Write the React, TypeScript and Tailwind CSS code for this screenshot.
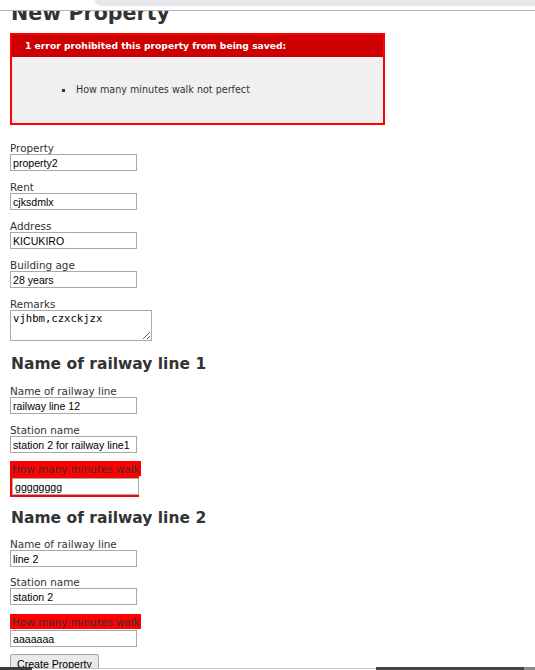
import React from "react";

const labelCls =
  "block h-[12px] leading-[12px] text-[10.4px] text-[#333] font-['DejaVu_Sans',Verdana,sans-serif] whitespace-nowrap";
const inputCls =
  "block w-[127px] h-[17px] border border-[#a9a9a9] bg-white px-[2px] text-[10.6px] leading-[15px] text-black font-['Liberation_Sans',Arial,sans-serif] outline-none";

type FieldProps = {
  label: string;
  value: string;
  className?: string;
};

const Field: React.FC<FieldProps> = ({ label, value, className = "" }) => (
  <div className={className}>
    <label className={labelCls}>{label}</label>
    <input className={inputCls} defaultValue={value} readOnly />
  </div>
);

const ErrorField: React.FC<FieldProps & { wrapInput?: boolean }> = ({
  label,
  value,
  className = "",
  wrapInput,
}) => (
  <div className={className}>
    <div className="w-[131px] h-[15px] bg-[red] p-[2px]">
      <label className={labelCls + " h-[11px] leading-[11px] text-[#4a1515]"}>{label}</label>
    </div>
    {wrapInput ? (
      <div className="w-[129px] bg-[red] p-[2px]">
        <input className={inputCls + " w-[125px]"} defaultValue={value} readOnly />
      </div>
    ) : (
      <input className={inputCls + " mt-px"} defaultValue={value} readOnly />
    )}
  </div>
);

const App: React.FC = () => {
  return (
    <div className="relative h-[670px] w-[535px] overflow-hidden bg-white font-['DejaVu_Sans',Verdana,sans-serif] text-[#333]">
      {/* Page */}
      <div className="pl-[10px] pt-px">
        <h1 className="h-[24px] leading-[24px] text-[20.6px] font-bold pl-px">New Property</h1>

        {/* Error explanation */}
        <div className="mt-[8px] w-[375px] border-2 border-[red] bg-[#f0f0f0]">
          <div className="h-[22px] flex items-center pl-[13px] bg-[#cc0000] text-white font-bold text-[9.2px]">
            1 error prohibited this property from being saved:
          </div>
          <div className="h-[66px] flex items-center pl-[50px] text-[9.6px] text-[#333]">
            <span className="w-[3px] h-[3px] bg-[#333] mr-[11px]" />
            How many minutes walk not perfect
          </div>
        </div>

        {/* Property fields */}
        <Field label="Property" value="property2" className="mt-[17px]" />
        <Field label="Rent" value="cjksdmlx" className="mt-[10px]" />
        <Field label="Address" value="KICUKIRO" className="mt-[10px]" />
        <Field label="Building age" value="28 years" className="mt-[10px]" />
        <div className="mt-[10px]">
          <label className={labelCls}>Remarks</label>
          <textarea
            className="block w-[142px] h-[31px] border border-[#a9a9a9] px-[2px] py-px text-[10.6px] leading-[13px] text-black font-['DejaVu_Sans_Mono','Liberation_Mono',monospace] resize-y outline-none"
            defaultValue="vjhbm,czxckjzx"
            readOnly
          />
        </div>

        {/* Railway line 1 */}
        <h3 className="mt-[13px] h-[20px] leading-[20px] text-[15.5px] font-bold pl-px">
          Name of railway line 1
        </h3>
        <Field label="Name of railway line" value="railway line 12" className="mt-[11px]" />
        <Field label="Station name" value="station 2 for railway line1" className="mt-[10px]" />
        <ErrorField label="How many minutes walk" value="gggggggg" className="mt-[8px]" wrapInput />

        {/* Railway line 2 */}
        <h3 className="mt-[11px] h-[20px] leading-[20px] text-[15.5px] font-bold pl-px">
          Name of railway line 2
        </h3>
        <Field label="Name of railway line" value="line 2" className="mt-[10px]" />
        <Field label="Station name" value="station 2" className="mt-[9px]" />
        <ErrorField label="How many minutes walk" value="aaaaaaa" className="mt-[9px]" />

        <button className="mt-[7px] h-[21px] px-[6px] border border-[#a6a6a6] rounded-[2px] bg-[#e9e9e9] text-[10.6px] leading-[19px] text-black font-['Liberation_Sans',Arial,sans-serif]">
          Create Property
        </button>
      </div>

      {/* Browser chrome at top */}
      <div className="absolute top-0 left-0 w-full h-[10px] bg-white">
        <div className="absolute top-0 left-[95px] right-0 h-[6px] bg-[#e6e7ea] rounded-bl-[8px]" />
      </div>
      <div className="absolute top-[10px] left-0 w-full h-px bg-[#b5b5b5]" />

      {/* Bottom bar */}
      <div className="absolute bottom-0 left-0 w-full h-[3px] flex items-end">
        <div className="w-[32px] h-[3px] bg-[#3a3a3a]" />
        <div className="flex-1 h-[2px] bg-white border-t border-[#c8c8c8]" />
        <div className="w-[148px] h-[3px] bg-[#444]" />
        <div className="w-[11px] h-[3px] bg-[#8a8a8a]" />
      </div>
    </div>
  );
};

export default App;
